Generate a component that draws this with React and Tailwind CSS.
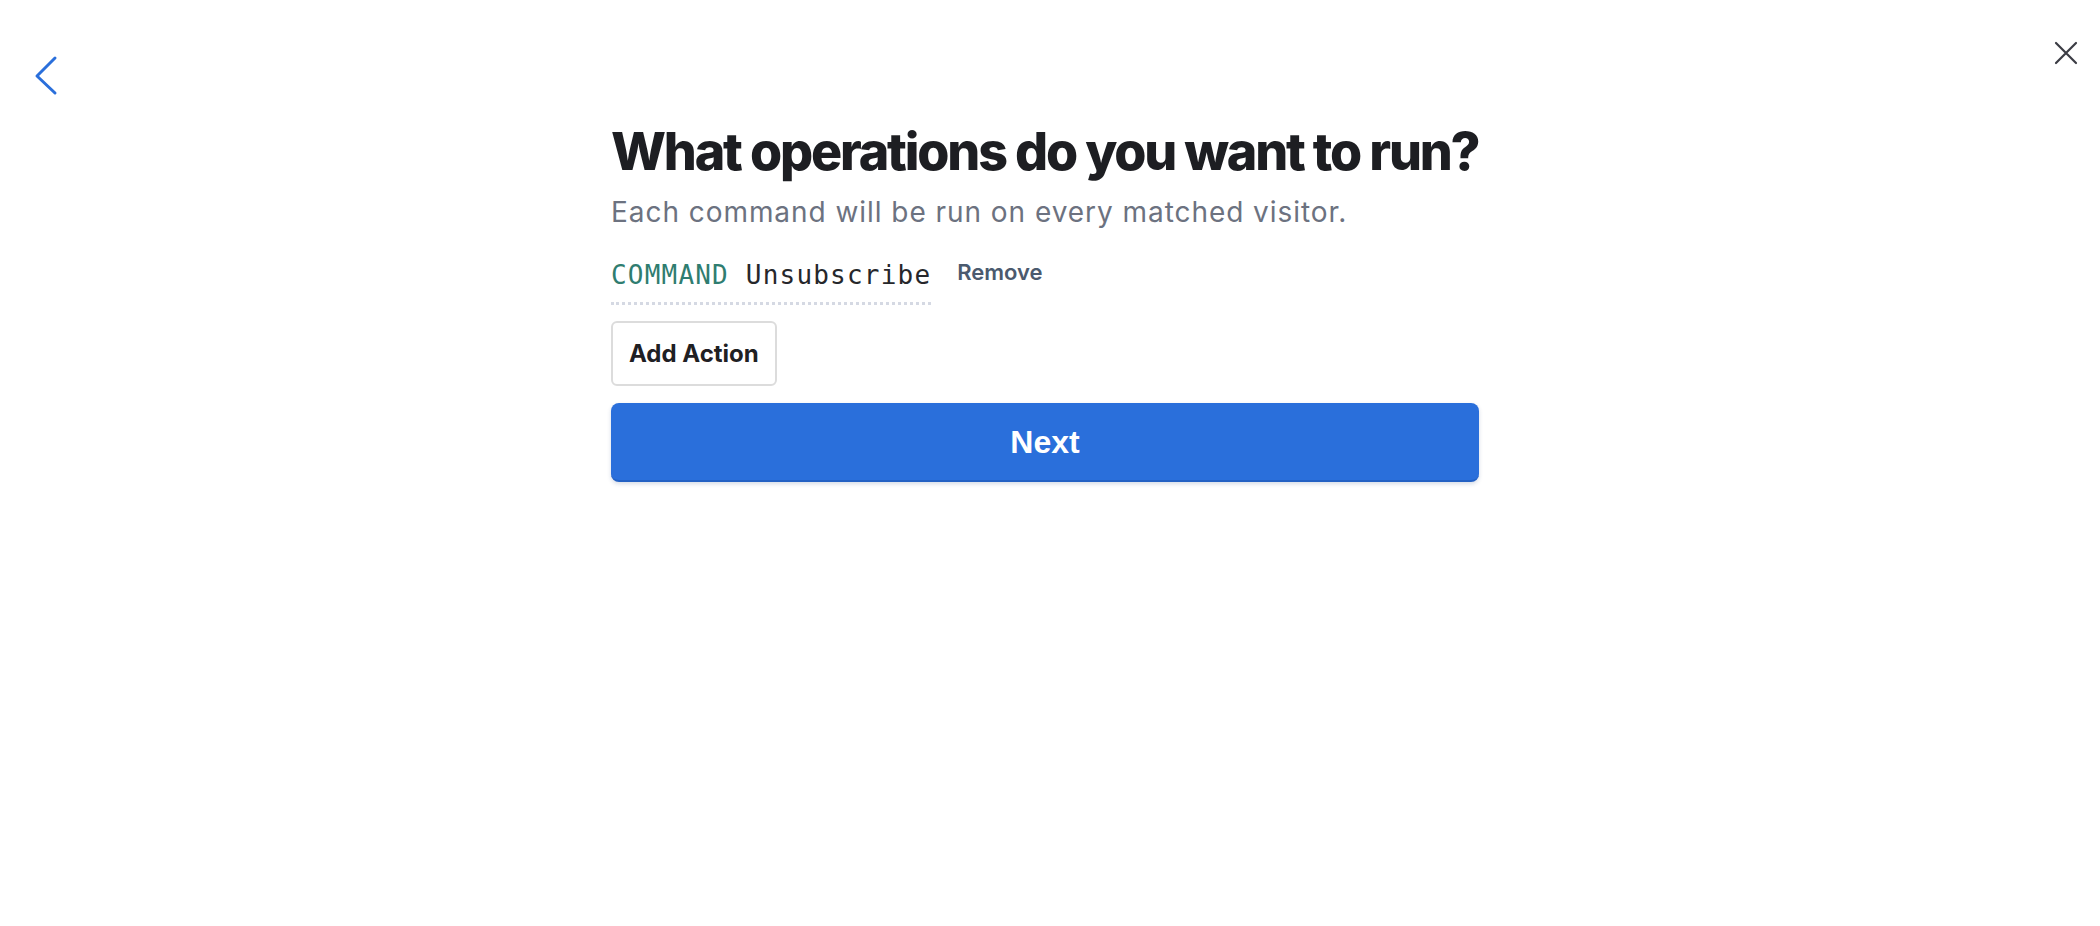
export default function App() {
  return (
    <div className="relative min-h-[926px] w-full bg-white" style={{ fontFamily: "Inter, 'Noto Sans', sans-serif" }}>
      <button className="absolute left-[34px] top-[55px] h-[42px] w-[24px]" aria-label="Back">
        <svg width="24" height="42" viewBox="0 0 24 42" fill="none">
          <path d="M21 3 L3 21 L21 38" stroke="#2a6fdb" strokeWidth="3" strokeLinecap="round" strokeLinejoin="round" />
        </svg>
      </button>
      <button className="absolute right-[18px] top-[37px] h-8 w-8" aria-label="Close">
        <svg width="32" height="32" viewBox="0 0 32 32" fill="none">
          <path d="M6 6 L26 26 M26 6 L6 26" stroke="#3b3c44" strokeWidth="2.2" strokeLinecap="round" />
        </svg>
      </button>

      <div className="flex justify-center pr-[10px] pt-[122px]">
        <div className="flex w-[868px] flex-col">
          <h1 className="whitespace-nowrap text-[52px] font-extrabold leading-[60px] tracking-[-0.042em] text-[#1d1e22]">
            What operations do you want to run?
          </h1>
          <p className="mt-[12px] text-[28px] leading-[36px] tracking-[0.95px] text-[#6c7280]">
            Each command will be run on every matched visitor.
          </p>

          <div className="mt-[29px] flex items-start">
            <span
              className="border-b-[3px] border-dotted border-[#d5d9e3] pb-[10px] text-[26px] leading-[33px] tracking-[1.2px]"
              style={{ fontFamily: "'DejaVu Sans Mono', monospace" }}
            >
              <span className="text-[#2f7d70]">COMMAND</span>{" "}
              <span className="text-[#26272b]">Unsubscribe</span>
            </span>
            <button className="-mt-[1px] ml-[26px] text-[22px] font-semibold leading-[28px] text-[#4b5a6e]">
              Remove
            </button>
          </div>

          <div className="mt-[16px] flex">
            <button className="h-[65px] rounded-[6px] border-2 border-[#dcdcdc] bg-white px-[16px] text-[24px] font-bold text-[#1f2023]">
              Add Action
            </button>
          </div>

          <button className="mt-[17px] h-[79px] w-full rounded-[8px] border-b-2 border-[#2361c4] bg-[#2a6fdb] text-[32px] font-bold text-white shadow-[0_2px_4px_rgba(30,60,120,0.18)]"
            style={{ fontFamily: "'Liberation Sans', Arial, sans-serif" }}>
            Next
          </button>
        </div>
      </div>
    </div>
  );
}
